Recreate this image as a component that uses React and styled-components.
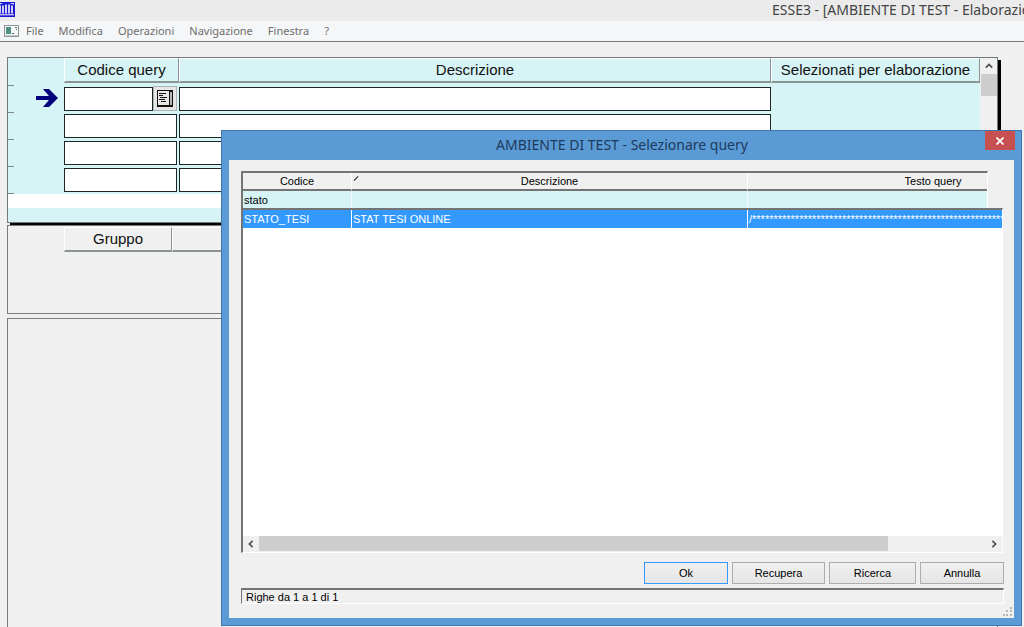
import styled, { createGlobalStyle } from 'styled-components';
import { useState } from 'react';

const menuItems = ['File', 'Modifica', 'Operazioni', 'Navigazione', 'Finestra', '?'];
const rows = [1, 2, 3, 4];

const App = () => {
  const [filter, setFilter] = useState('stato');

  return (
    <Window>
      <GlobalStyle />
      <TitleBar>
        <AppLogo />
        <WindowTitle>ESSE3 - [AMBIENTE DI TEST - Elaborazioni]</WindowTitle>
      </TitleBar>
      <MenuBar>
        <FormIcon />
        {menuItems.map((item) => (
          <MenuItem key={item} type="button">{item}</MenuItem>
        ))}
      </MenuBar>

      <Workspace>
        <QueryPanel>
          <QueryMain>
            <QueryHead>
              <span />
              <HeadCell>Codice query</HeadCell>
              <HeadCell>Descrizione</HeadCell>
              <HeadCell>Selezionati per elaborazione</HeadCell>
            </QueryHead>
            {rows.map((row) => (
              <QueryRow key={row}>
                <Gutter>
                  <Tick />
                  {row === 1 && <ArrowIcon />}
                </Gutter>
                <CodeCell>
                  <Field aria-label={`Codice query ${row}`} />
                  {row === 1 && (
                    <ListButton type="button" aria-label="Elenco valori"><ListIcon /></ListButton>
                  )}
                </CodeCell>
                <Field aria-label={`Descrizione ${row}`} />
              </QueryRow>
            ))}
            <Tick />
            <BlankStrip />
          </QueryMain>
          <VerticalScroll>
            <ScrollButton type="button" aria-label="Su"><Chevron direction="up" /></ScrollButton>
            <VerticalThumb />
          </VerticalScroll>
        </QueryPanel>

        <GroupPanel>
          <GroupHead>
            <span />
            <HeadCell>Gruppo</HeadCell>
            <HeadCell />
          </GroupHead>
        </GroupPanel>
        <DetailPanel />
      </Workspace>

      <Dialog role="dialog" aria-labelledby="dialog-title">
        <DialogBar>
          <DialogTitle id="dialog-title">AMBIENTE DI TEST - Selezionare query</DialogTitle>
          <CloseButton type="button" aria-label="Chiudi">
            <svg width="8" height="8" viewBox="0 0 8 8">
              <path d="M0.5 0.5 L7.5 7.5 M7.5 0.5 L0.5 7.5" stroke="#fff" strokeWidth="1.8" />
            </svg>
          </CloseButton>
        </DialogBar>
        <DialogBody>
          <List>
            <HeadClip>
              <Table>
                <Columns />
                <thead>
                  <tr>
                    <Th scope="col">Codice</Th>
                    <Th scope="col"><SortMark />Descrizione</Th>
                    <Th scope="col">Testo query</Th>
                  </tr>
                </thead>
                <tbody>
                  <tr>
                    <FilterCell>
                      <FilterInput
                        aria-label="Filtro codice"
                        value={filter}
                        onChange={(e) => setFilter(e.target.value)}
                      />
                    </FilterCell>
                    <FilterCell />
                    <FilterCell />
                  </tr>
                </tbody>
              </Table>
            </HeadClip>
            <ListBody>
              <Table>
                <Columns />
                <tbody>
                  <tr>
                    <Td>STATO_TESI</Td>
                    <Td>STAT TESI ONLINE</Td>
                    <Td>{'/' + '*'.repeat(80)}</Td>
                  </tr>
                </tbody>
              </Table>
            </ListBody>
            <HorizontalScroll>
              <ScrollButton type="button" aria-label="Sinistra"><Chevron direction="left" /></ScrollButton>
              <Track><HorizontalThumb /></Track>
              <ScrollButton type="button" aria-label="Destra"><Chevron direction="right" /></ScrollButton>
            </HorizontalScroll>
          </List>
          <Actions>
            <Button type="button" $primary>Ok</Button>
            <Button type="button" $width={93}>Recupera</Button>
            <Button type="button" $width={87}>Ricerca</Button>
            <Button type="button">Annulla</Button>
          </Actions>
          <Status>Righe da 1 a 1 di 1</Status>
          <Grip>
            <svg width="9" height="9" viewBox="0 0 9 9" shapeRendering="crispEdges">
              <path d="M7 0h2v2H7z M7 3h2v2H7z M7 7h2v2H7z M3 3h2v2H3z M3 7h2v2H3z M0 7h2v2H0z" fill="#b8b8b8" />
            </svg>
          </Grip>
        </DialogBody>
      </Dialog>
    </Window>
  );
}

const Columns = () => (
  <colgroup>
    <CodeCol />
    <DescCol />
    <TextCol />
  </colgroup>
);

const AppLogo = () => (
  <svg width="15" height="17" viewBox="0 0 15 17">
    <rect y="2" width="15" height="15" fill="#1717d6" />
    <path d="M0 3h3L0 4.5z M9 3h5v1.5z" fill="#e4e4fb" />
    <path d="M0 6v7 M3 6v7 M6 5v8 M9 5v8 M12 6v7" stroke="#fff" strokeWidth="1.6" strokeLinecap="round" />
    <path d="M0 14.8h14" stroke="#fff" />
  </svg>
);

const FormIcon = () => (
  <svg width="15" height="12" viewBox="0 0 15 12">
    <rect x="0.5" y="0.5" width="14" height="11" fill="#f4f8f7" stroke="#8d9694" />
    <rect x="2" y="2" width="5" height="7" fill="#4f8f86" />
    <path d="M8 8.5h2 M11 2.5h2 M12 4.5h1" stroke="#58736f" />
    <path d="M1 10.5h13" stroke="#c5cccb" />
  </svg>
);

const ArrowIcon = () => (
  <svg width="22" height="20" viewBox="0 0 22 20">
    <path d="M0 8h13L7 1h6l9 9-9 9H7l6-7H0z" fill="#00007c" />
  </svg>
);

const ListIcon = () => (
  <svg width="16" height="17" viewBox="0 0 16 17" shapeRendering="crispEdges">
    <path d="M0 0h16v17H0z" fill="#111" />
    <path d="M1 1h11v14H1z" fill="#e6e6e6" />
    <path d="M13 2h2v13h-2z" fill="#b8b8b8" />
    <path d="M2 3.5h7 M2 5.5h4 M3 7.5h7 M2 9.5h6 M4 11.5h5" stroke="#111" />
  </svg>
);

const chevrons = { up: 'M1 7 L5 3 L9 7', left: 'M7 1 L3 5 L7 9', right: 'M3 1 L7 5 L3 9' };

const Chevron = ({ direction }) => (
  <svg width="8" height="8" viewBox="0 0 10 10">
    <path d={chevrons[direction]} fill="none" stroke="#505050" strokeWidth="2.2" />
  </svg>
);

const GlobalStyle = createGlobalStyle`
  * {
    box-sizing: border-box;
  }

  body {
    margin: 0;
    overflow: hidden;
    background-color: #f0f0f0;
    font-family: 'Liberation Sans', Arial, sans-serif;
  }

  button, input {
    font-family: inherit;
    border-radius: 0;
    margin: 0;
    padding: 0;
  }

  svg {
    display: block;
    flex: none;
  }
`;

const Window = styled.div`
  position: relative;
  display: flex;
  flex-direction: column;
  height: 100vh;
  overflow: hidden;
`;

const TitleBar = styled.header`
  display: flex;
  justify-content: space-between;
  height: 21px;
  background-color: #ebebeb;
`;

const WindowTitle = styled.h1`
  width: 252px;
  margin: 0;
  overflow: hidden;
  white-space: nowrap;
  color: #444;
  font-family: 'Noto Sans', sans-serif;
  font-size: 14px;
  font-weight: 400;
  line-height: 20px;
`;

const MenuBar = styled.nav`
  display: flex;
  align-items: center;
  gap: 15px;
  height: 21px;
  padding-left: 4px;
  background-color: #f5f6f7;
  border-bottom: 1px solid #7c7c7c;

  svg {
    margin-right: -8px;
  }
`;

const MenuItem = styled.button`
  border: none;
  background: none;
  color: #6e6e6e;
  font-family: 'Noto Sans', sans-serif;
  font-size: 11px;
  line-height: 18px;
`;

const Workspace = styled.main`
  display: flex;
  flex: 1;
  flex-direction: column;
  padding: 15px 26px 0 7px;
`;

const QueryPanel = styled.section`
  display: flex;
  height: 166px;
  background-color: #d6f3f5;
  border: 1px solid #6f7b7b;
  box-shadow: 3px 3px 0 #000;
`;

const QueryMain = styled.div`
  flex: 1;
`;

const QueryHead = styled.div`
  display: grid;
  grid-template-columns: 56px 115px 1fr 209px;
  height: 25px;
  margin-bottom: 2px;
`;

const HeadCell = styled.div`
  border: 1px solid #8a9494;
  border-width: 1px 1px 2px;
  border-top-color: #fff;
  border-left-color: #fff;
  color: #111;
  font-size: 15px;
  line-height: 21px;
  text-align: center;
  white-space: nowrap;
`;

const QueryRow = styled.div`
  display: grid;
  grid-template-columns: 56px 115px 1fr 209px;
  height: 27px;
`;

const Gutter = styled.div`
  display: flex;
  align-items: flex-start;
  justify-content: space-between;
  padding-right: 6px;

  svg {
    margin-top: 3px;
  }
`;

const Tick = styled.div`
  width: 6px;
  height: 1px;
  background-color: #7d8a8a;
`;

const CodeCell = styled.div`
  display: flex;
  padding-right: 2px;
`;

const Field = styled.input`
  flex: 1;
  width: 100%;
  min-width: 0;
  height: 24px;
  margin-top: 2px;
  border: 1px solid #1c2626;
  background-color: #fff;
  font-size: 15px;
`;

const ListButton = styled.button`
  display: flex;
  align-items: center;
  justify-content: center;
  width: 24px;
  height: 25px;
  margin-top: 1px;
  border: 1px solid #b0b4b4;
  background-color: #e6e6e6;
`;

const BlankStrip = styled.div`
  height: 14px;
  background-color: #fff;
`;

const VerticalScroll = styled.div`
  display: flex;
  flex-direction: column;
  width: 17px;
  padding-left: 1px;
  background-color: #f0f0f0;
`;

const ScrollButton = styled.button`
  display: flex;
  flex: none;
  align-items: center;
  justify-content: center;
  width: 16px;
  height: 16px;
  border: none;
  background-color: #f0f0f0;
`;

const VerticalThumb = styled.div`
  height: 22px;
  background-color: #cdcdcd;
`;

const GroupPanel = styled.section`
  height: 89px;
  margin-top: 2px;
  padding-top: 1px;
  border: 1px solid #7c7c7c;
`;

const GroupHead = styled.div`
  display: grid;
  grid-template-columns: 56px 108px 1fr;
  height: 25px;
`;

const DetailPanel = styled.section`
  flex: 1;
  margin-top: 4px;
  border: 1px solid #7c7c7c;
  border-bottom: none;
`;

const Dialog = styled.section`
  position: absolute;
  top: 130px;
  right: 2px;
  bottom: 1px;
  left: 221px;
  display: flex;
  flex-direction: column;
  padding: 0 7px 7px;
  background-color: #5b9bd5;
  border: 1px solid #3f77ad;
`;

const DialogBar = styled.header`
  display: grid;
  grid-template-columns: 30px 1fr 30px;
  height: 29px;
  margin-right: -1px;
`;

const DialogTitle = styled.h2`
  grid-column: 2;
  margin: 0;
  color: #1d3a5c;
  font-family: 'Noto Sans', sans-serif;
  font-size: 14px;
  font-weight: 400;
  line-height: 28px;
  text-align: center;
  white-space: nowrap;
`;

const CloseButton = styled.button`
  display: flex;
  align-items: center;
  justify-content: center;
  height: 19px;
  border: none;
  background-color: #c75050;
`;

const DialogBody = styled.div`
  position: relative;
  display: flex;
  flex: 1;
  flex-direction: column;
  min-height: 0;
  padding: 11px 10px 14px 12px;
  background-color: #f0f0f0;
  font-size: 11px;
`;

const List = styled.div`
  display: flex;
  flex: 1;
  flex-direction: column;
  min-height: 0;
  margin-right: 1px;
  border-left: 2px solid #747474;
  border-bottom: 1px solid #fff;
`;

const HeadClip = styled.div`
  margin-right: 15px;
  overflow: hidden;
  border-top: 2px solid #747474;
  border-right: 1px solid #fff;
`;

const ListBody = styled.div`
  flex: 1;
  min-height: 0;
  overflow: hidden;
  background-color: #fff;
  border-top: 2px solid #747474;
  border-right: 1px solid #fff;
`;

const Table = styled.table`
  width: 876px;
  table-layout: fixed;
  border-collapse: separate;
  border-spacing: 0;
`;

const CodeCol = styled.col`
  width: 109px;
`;

const DescCol = styled.col`
  width: 396px;
`;

const TextCol = styled.col`
  width: 371px;
`;

const Th = styled.th`
  position: relative;
  height: 18px;
  padding: 0;
  border-right: 1px solid #fff;
  border-bottom: 2px solid #747474;
  font-weight: 400;
  line-height: 16px;
`;

const SortMark = styled.span`
  position: absolute;
  top: 5px;
  left: 1px;
  width: 6px;
  height: 1px;
  background-color: #222;
  transform: rotate(-45deg);
`;

const FilterCell = styled.td`
  height: 17px;
  padding: 0;
  border-right: 1px solid #eefafa;
  background-color: #d6f3f5;
`;

const FilterInput = styled.input`
  display: block;
  width: 100%;
  height: 17px;
  padding-left: 1px;
  border: none;
  outline: none;
  background: none;
  font-size: 11px;
`;

const Td = styled.td`
  height: 18px;
  padding: 0 1px;
  overflow: hidden;
  background-color: #3399ff;
  border-right: 1px solid #fff;
  color: #fff;
  line-height: 18px;
  white-space: nowrap;
`;

const HorizontalScroll = styled.div`
  display: flex;
  height: 16px;
  background-color: #f0f0f0;
  border-right: 1px solid #fff;
`;

const Track = styled.div`
  flex: 1;
`;

const HorizontalThumb = styled.div`
  width: 86.5%;
  height: 15px;
  background-color: #cdcdcd;
`;

const Actions = styled.div`
  display: flex;
  justify-content: flex-end;
  gap: 4px;
  margin: 9px 0 4px;
`;

const Button = styled.button`
  width: ${({ $width }) => $width || 84}px;
  height: 22px;
  border: 1px solid ${({ $primary }) => $primary ? '#3399ff' : '#acacac'};
  background: linear-gradient(#f0f0f0, #e5e5e5);
  color: #000;
  font-size: 11px;
`;

const Status = styled.div`
  height: 16px;
  padding-left: 4px;
  border: 1px solid #747474;
  border-top-width: 2px;
  border-right-color: #fff;
  border-bottom-color: #fff;
  line-height: 14px;
`;

const Grip = styled.div`
  position: absolute;
  right: 2px;
  bottom: 2px;
`;

export default App;
